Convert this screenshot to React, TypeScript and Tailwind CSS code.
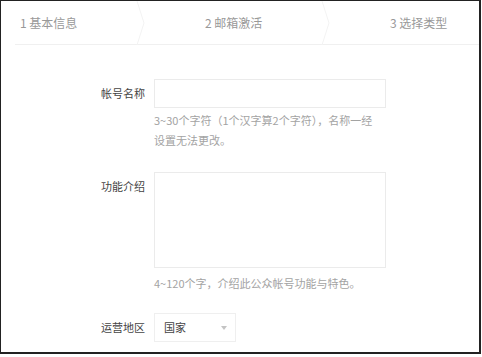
const font = "font-['Noto_Sans_CJK_SC','Noto_Sans',sans-serif]"

function Chevron() {
  return (
    <svg width="10" height="44" viewBox="0 0 10 44" className="shrink-0">
      <path d="M1 0 L8 22 L1 44" fill="none" stroke="#f3f3f3" strokeWidth="1" />
    </svg>
  )
}

function Steps() {
  return (
    <div className="ml-[14px] flex h-[44px] items-center border-b border-[#f0f0f0] text-[12px] text-[#999]">
      <span className="w-[121px] pl-[5px]">1 基本信息</span>
      <Chevron />
      <span className="w-[54px]" />
      <span className="w-[121px] pl-[5px]">2 邮箱激活</span>
      <Chevron />
      <span className="w-[54px]" />
      <span className="pl-[5px]">3 选择类型</span>
    </div>
  )
}

function Row({ label, children }: { label: string; children: React.ReactNode }) {
  return (
    <div className="flex items-start">
      <div className="flex h-[29px] w-[144px] shrink-0 items-center justify-end text-[11px] text-[#444]">
        {label}
      </div>
      <div className="ml-[9px]">{children}</div>
    </div>
  )
}

export default function App() {
  return (
    <div className={`h-[357px] w-[482px] bg-white ${font}`}>
      <div className="flex h-[354px] w-[481px] flex-col overflow-hidden border-t border-r-2 border-b-2 border-l border-[#222]">
        <Steps />

        <div className="mt-[34px] flex flex-col">
          <Row label="帐号名称">
            <div className="h-[29px] w-[232px] border border-[#ebebeb] bg-white" />
            <p className="mt-[2px] text-[11px] leading-[20px] text-[#a3a3a3]">
              3~30个字符（1个汉字算2个字符），名称一经
              <br />
              设置无法更改。
            </p>
          </Row>

          <div className="mt-[22px]">
            <Row label="功能介绍">
              <div className="h-[96px] w-[232px] border border-[#ebebeb] bg-white" />
              <p className="mt-[5px] text-[11px] leading-[20px] text-[#a3a3a3]">
                4~120个字，介绍此公众帐号功能与特色。
              </p>
            </Row>
          </div>

          <div className="mt-[20px]">
            <Row label="运营地区">
              <div className="flex h-[29px] w-[82px] items-center justify-between border border-[#efefef] bg-white pr-[8px] pl-[9px] text-[11px] text-[#444]">
                <span>国家</span>
                <svg width="6" height="4" viewBox="0 0 6 4">
                  <path d="M0 0 L6 0 L3 4 Z" fill="#c4c4c4" />
                </svg>
              </div>
            </Row>
          </div>
        </div>
      </div>
    </div>
  )
}
